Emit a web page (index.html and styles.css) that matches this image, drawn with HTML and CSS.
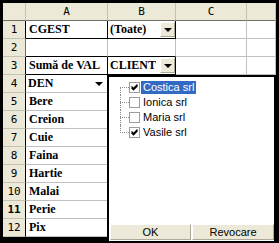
FILE: index.html
```html
<!doctype html>
<html lang="ro">
    <head>
        <meta charset="UTF-8" />
        <meta name="viewport" content="width=device-width, initial-scale=1.0" />
        <title>Tabel pivot - CLIENT</title>
        <link rel="stylesheet" href="styles.css">
    </head>
    <body>
        <div class="sheet">
            <div class="grid">
                <div class="corner"></div>
                <div class="colhead">A</div>
                <div class="colhead">B</div>
                <div class="colhead">C</div>
                <div class="colhead"></div>

                <div class="rowhead pv">1</div>
                <div class="cell edge-r edge-b">CGEST</div>
                <div class="cell drop edge-r edge-b">
                    <span class="val">(Toate)</span><span class="dd"><i></i></span>
                </div>
                <div class="cell"></div>
                <div class="cell"></div>

                <div class="rowhead">2</div>
                <div class="cell edge-b"></div>
                <div class="cell edge-b"></div>
                <div class="cell"></div>
                <div class="cell"></div>

                <div class="rowhead pv">3</div>
                <div class="cell edge-r edge-b">Sumă de VAL</div>
                <div class="cell drop edge-r edge-b">
                    <span class="val">CLIENT</span><span class="dd"><i></i></span>
                </div>
                <div class="cell"></div>
                <div class="cell"></div>

                <div class="rowhead pv">4</div>
                <div class="cell drop edge-r">
                    <span class="val">DEN</span><span class="dd flat"><i></i></span>
                </div>
                <div class="cell"></div>
                <div class="cell"></div>
                <div class="cell"></div>

                <div class="rowhead pv">5</div>
                <div class="cell edge-r">Bere</div>
                <div class="cell"></div><div class="cell"></div><div class="cell"></div>

                <div class="rowhead pv">6</div>
                <div class="cell edge-r">Creion</div>
                <div class="cell"></div><div class="cell"></div><div class="cell"></div>

                <div class="rowhead pv">7</div>
                <div class="cell edge-r">Cuie</div>
                <div class="cell"></div><div class="cell"></div><div class="cell"></div>

                <div class="rowhead pv">8</div>
                <div class="cell edge-r">Faina</div>
                <div class="cell"></div><div class="cell"></div><div class="cell"></div>

                <div class="rowhead pv">9</div>
                <div class="cell edge-r">Hartie</div>
                <div class="cell"></div><div class="cell"></div><div class="cell"></div>

                <div class="rowhead pv">10</div>
                <div class="cell edge-r">Malai</div>
                <div class="cell"></div><div class="cell"></div><div class="cell"></div>

                <div class="rowhead pv active">11</div>
                <div class="cell edge-r">Perie</div>
                <div class="cell"></div><div class="cell"></div><div class="cell"></div>

                <div class="rowhead pv">12</div>
                <div class="cell edge-r">Pix</div>
                <div class="cell"></div><div class="cell"></div><div class="cell"></div>
            </div>

            <div class="popup">
                <ul class="tree">
                    <li class="item">
                        <span class="branch"></span>
                        <span class="cb"><svg width="9" height="9" viewBox="0 0 9 9"><path d="M1.5 3.5 L3.5 5.5 L7.5 1.5 M1.5 4.8 L3.5 6.8 L7.5 2.8" fill="none" stroke="#000" stroke-width="1.2"/></svg></span>
                        <span class="label selected">Costica srl</span>
                    </li>
                    <li class="item">
                        <span class="branch"></span>
                        <span class="cb"></span>
                        <span class="label">Ionica srl</span>
                    </li>
                    <li class="item">
                        <span class="branch"></span>
                        <span class="cb"></span>
                        <span class="label">Maria srl</span>
                    </li>
                    <li class="item">
                        <span class="branch"></span>
                        <span class="cb"><svg width="9" height="9" viewBox="0 0 9 9"><path d="M1.5 3.5 L3.5 5.5 L7.5 1.5 M1.5 4.8 L3.5 6.8 L7.5 2.8" fill="none" stroke="#000" stroke-width="1.2"/></svg></span>
                        <span class="label">Vasile srl</span>
                    </li>
                </ul>
                <div class="buttons">
                    <button class="btn ok">OK</button>
                    <button class="btn">Revocare</button>
                </div>
            </div>
        </div>
    </body>
</html>
```

FILE: styles.css
```css
html,
body {
    margin: 0;
    width: 279px;
    height: 243px;
    overflow: hidden;
    background-color: #000;
}
.sheet {
    position: relative;
    width: 273px;
    margin: 3px 0 0 3px;
}
.grid {
    display: grid;
    grid-template-columns: 23px 82px 68px 71px 29px;
    grid-auto-rows: 18px;
    background-color: #fff;
}
.grid > div {
    box-sizing: border-box;
    border-right: 1px solid #c0c0c0;
    border-bottom: 1px solid #c0c0c0;
}
.corner,
.colhead,
.rowhead {
    background-color: #ece9d8;
    font-family: "DejaVu Sans Mono", monospace;
    font-size: 11px;
    color: #000;
}
.grid > .corner,
.grid > .colhead {
    border-right-color: #c5c2b2;
    border-bottom-color: #716f64;
}
.colhead {
    display: flex;
    align-items: center;
    justify-content: center;
}
.grid > .rowhead {
    display: flex;
    align-items: center;
    justify-content: center;
    border-right-color: #716f64;
    border-bottom-color: #c5c2b2;
}
.grid > .rowhead.pv {
    border-right-color: #000;
}
.rowhead.active {
    font-weight: bold;
}
.cell {
    display: flex;
    align-items: flex-end;
    padding: 0 0 2px 3px;
    font-family: "Liberation Serif", "Times New Roman", serif;
    font-size: 12px;
    font-weight: bold;
    line-height: 13px;
    color: #000;
    white-space: nowrap;
    overflow: hidden;
}
.grid > .edge-r {
    border-right-color: #000;
}
.grid > .edge-b {
    border-bottom-color: #000;
}
.cell.drop {
    padding: 0 0 0 2px;
    align-items: center;
    justify-content: space-between;
}
.cell.drop .val {
    align-self: flex-end;
    padding-bottom: 2px;
    overflow: hidden;
}
.dd {
    flex: none;
    box-sizing: border-box;
    width: 15px;
    height: 15px;
    display: flex;
    align-items: center;
    justify-content: center;
    background-color: #ece9d8;
    border: 1px solid;
    border-color: #fff #aca899 #aca899 #fff;
}
.dd i {
    width: 0;
    height: 0;
    border-left: 4px solid transparent;
    border-right: 4px solid transparent;
    border-top: 4px solid #000;
}
.dd.flat {
    background: none;
    border-color: transparent;
    margin-right: 1px;
}

/* field list dropdown */
.popup {
    position: absolute;
    left: 104px;
    top: 72px;
    width: 169px;
    height: 168px;
    box-sizing: border-box;
    border: 2px solid #000;
    background-color: #ece9d8;
    display: flex;
    flex-direction: column;
    font-family: "Liberation Sans", Arial, sans-serif;
    font-size: 11px;
}
.tree {
    flex: 1;
    margin: 0;
    padding: 3px 0 0 11px;
    list-style: none;
    background-color: #fff;
}
.item {
    display: flex;
    align-items: center;
    height: 15px;
}
.branch {
    position: relative;
    flex: none;
    width: 9px;
    height: 15px;
}
.branch::before {
    content: "";
    position: absolute;
    left: 0;
    top: 0;
    bottom: 0;
    border-left: 1px dotted #8a8a8a;
}
.branch::after {
    content: "";
    position: absolute;
    left: 0;
    top: 7px;
    width: 9px;
    border-top: 1px dotted #8a8a8a;
}
.item:first-child .branch::before {
    top: 7px;
}
.item:last-child .branch::before {
    bottom: 7px;
}
.cb {
    flex: none;
    box-sizing: border-box;
    width: 11px;
    height: 11px;
    border: 1px solid #9c9c9c;
    background-color: #fff;
    display: flex;
    align-items: center;
    justify-content: center;
}
.label {
    margin-left: 1px;
    padding: 0 2px;
    line-height: 13px;
    color: #000;
}
.label.selected {
    background-color: #316ac5;
    color: #fff;
}
.buttons {
    display: flex;
    gap: 1px;
    padding: 0 0 1px 1px;
    background-color: #fff;
}
.btn {
    box-sizing: border-box;
    width: 82px;
    height: 16px;
    margin: 0;
    padding: 0;
    background-color: #ece9d8;
    border: 1px solid;
    border-color: #fff #aca899 #aca899 #fff;
    font-family: "Liberation Sans", Arial, sans-serif;
    font-size: 11px;
    line-height: 14px;
    color: #000;
}
.btn.ok {
    width: 81px;
}
```
